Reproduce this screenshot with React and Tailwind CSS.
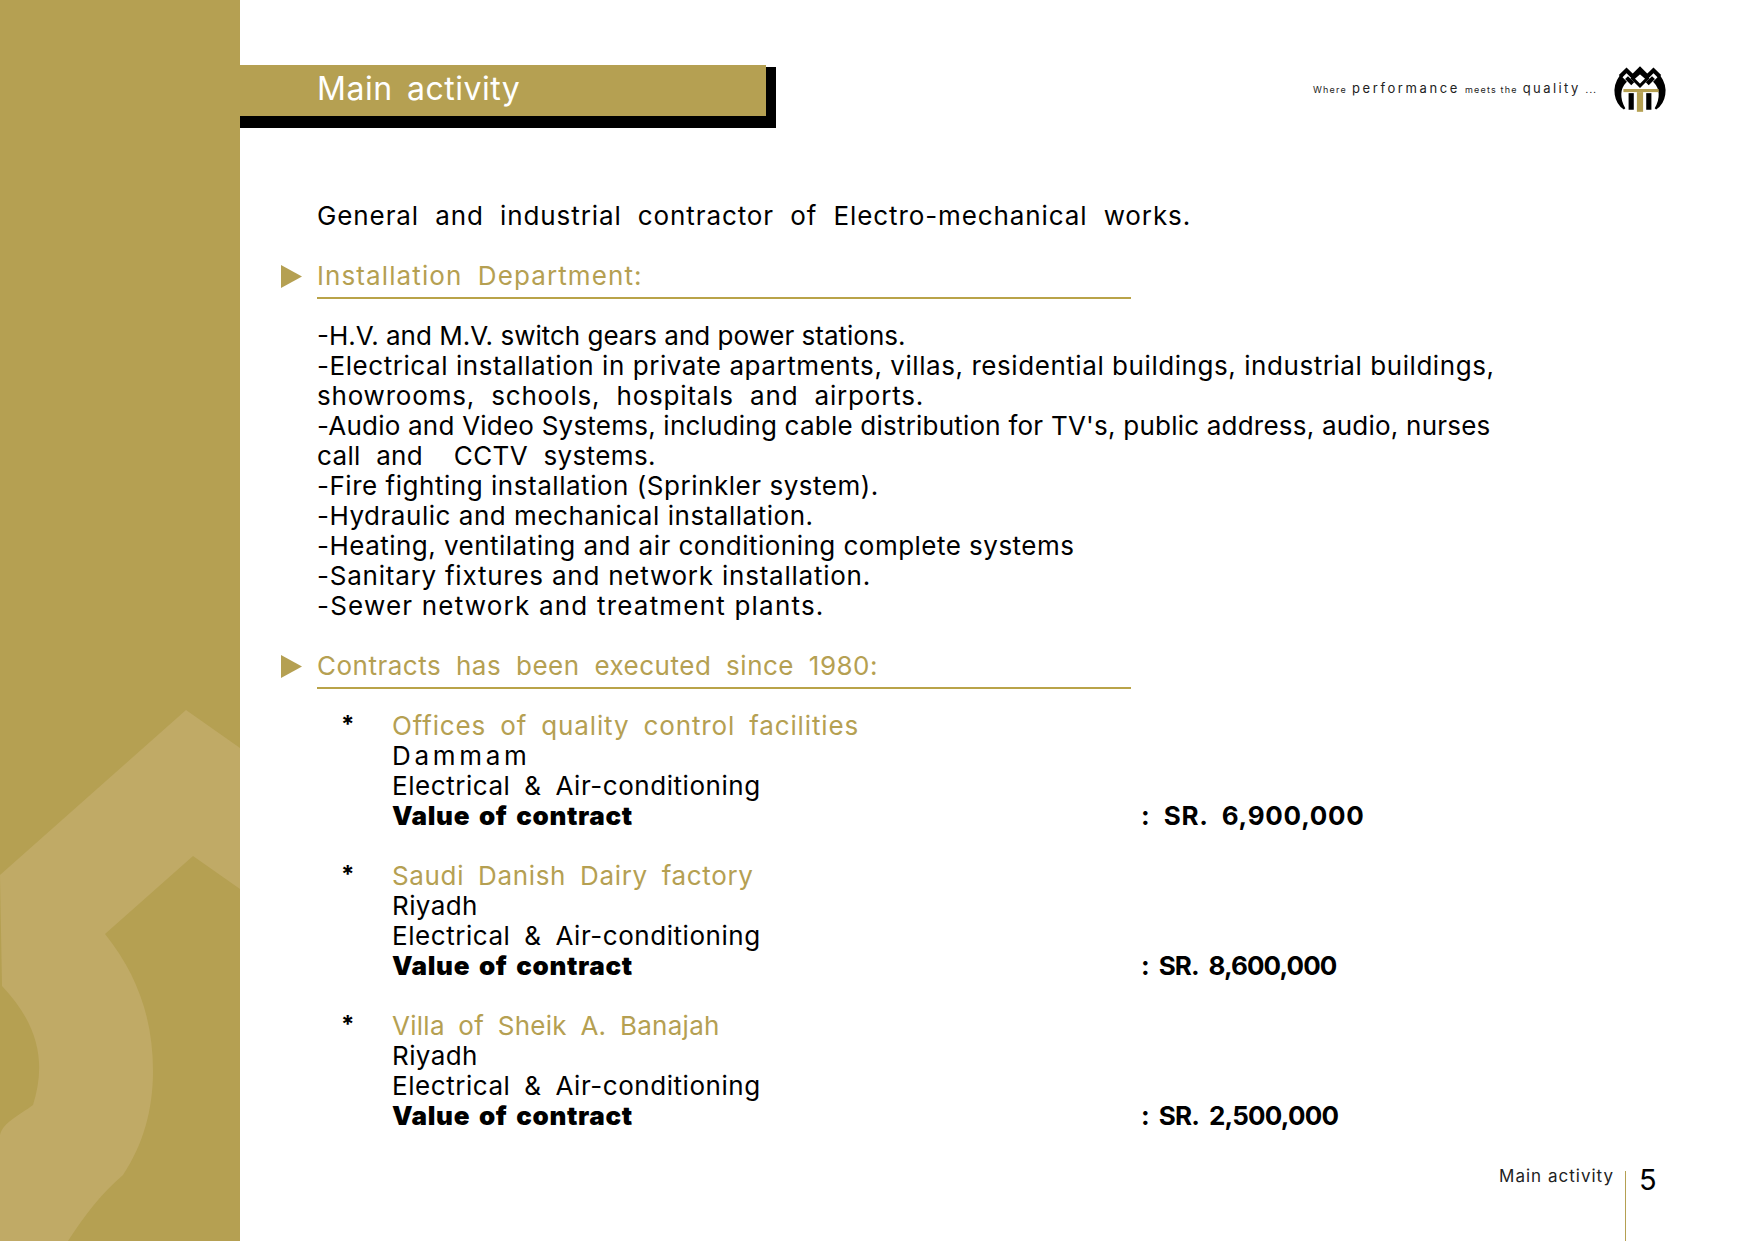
const GOLD = "text-[#b5a052]";

const installList = [
  { text: "-H.V. and M.V. switch gears and power stations.", cls: "tracking-[0px]" },
  { text: "-Electrical installation in private apartments, villas, residential buildings, industrial buildings,", cls: "tracking-[0.56px]" },
  { text: "showrooms,  schools,  hospitals  and  airports.", cls: "tracking-[0.8px]" },
  { text: "-Audio and Video Systems, including cable distribution for TV's, public address, audio, nurses", cls: "tracking-[0.22px]" },
  { text: "call  and    CCTV  systems.", cls: "tracking-[0.37px]" },
  { text: "-Fire fighting installation (Sprinkler system).", cls: "tracking-[0.53px]" },
  { text: "-Hydraulic and mechanical installation.", cls: "tracking-[0.53px]" },
  { text: "-Heating, ventilating and air conditioning complete systems", cls: "tracking-[0.48px]" },
  { text: "-Sanitary fixtures and network installation.", cls: "tracking-[0.77px]" },
  { text: "-Sewer network and treatment plants.", cls: "tracking-[1.2px]" },
];

const contracts = [
  {
    name: "Offices of quality control facilities",
    nameCls: "tracking-[0.85px]",
    city: "Dammam",
    cityCls: "tracking-[3.7px]",
    value: "SR.  6,900,000",
    valueCls: "ml-[14px] tracking-[0.75px]",
  },
  {
    name: "Saudi Danish Dairy factory",
    nameCls: "tracking-[0.65px]",
    city: "Riyadh",
    cityCls: "tracking-[0.4px]",
    value: "SR.  8,600,000",
    valueCls: "ml-[9px] -tracking-[0.9px]",
  },
  {
    name: "Villa of Sheik A. Banajah",
    nameCls: "tracking-[0.27px]",
    city: "Riyadh",
    cityCls: "tracking-[0.4px]",
    value: "SR.  2,500,000",
    valueCls: "ml-[9px] -tracking-[0.8px]",
  },
];

function Arrow() {
  return (
    <svg width="21" height="23" viewBox="0 0 21 23" className="shrink-0">
      <polygon points="0,0 21,11.5 0,23" fill="#b5a052" />
    </svg>
  );
}

// section heading with the little arrow and rule under it
function Heading({ children, cls }) {
  return (
    <div className="flex items-start -ml-[36px]">
      <div className="w-[36px] h-[30px] flex items-center">
        <Arrow />
      </div>
      <div className={`w-[814px] h-[38px] border-b-2 border-[#b9a348] ${GOLD} text-[26px] leading-[30px] whitespace-pre [word-spacing:7px] ${cls}`}>
        {children}
      </div>
    </div>
  );
}

function Logo() {
  return (
    <svg width="56" height="48" viewBox="0 0 54 46" fill="none">
      {/* crown */}
      <path d="M8 11 L14 5 L20 11 L27 4 L34 11 L40 5 L46 11" stroke="#000" strokeWidth="4" />
      <path d="M20 13 L27 7 L34 13 L27 20 Z" stroke="#000" strokeWidth="3" />
      <path d="M14 12 L20 18 M40 12 L34 18" stroke="#000" strokeWidth="4" />
      {/* shield sides */}
      <path d="M8 11 L13 16 C7 22 6 32 12 42 C3 36 0 22 8 11 Z" fill="#000" stroke="#000" strokeWidth="2" />
      <path d="M46 11 L41 16 C47 22 48 32 42 42 C51 36 54 22 46 11 Z" fill="#000" stroke="#000" strokeWidth="2" />
      {/* columns */}
      <rect x="11" y="23" width="34" height="3" fill="#b5a052" />
      <rect x="24" y="26" width="6" height="19" fill="#b5a052" />
      <rect x="16" y="27" width="5" height="16" fill="#000" />
      <rect x="33" y="27" width="5" height="16" fill="#000" />
    </svg>
  );
}

export default function App() {
  return (
    <div className="relative flex w-[1754px] h-[1241px] overflow-hidden bg-white text-black font-['Inter',sans-serif]">
      {/* left band */}
      <div className="relative w-[240px] shrink-0 bg-[#b5a052]">
        <svg width="240" height="1241" viewBox="0 0 240 1241" className="absolute inset-0">
          <path
            d="M186 710 L240 748 L240 889 L193 856 L105 934 C138 975 153 1020 153 1071 C153 1110 143 1145 123 1175 C100 1195 85 1215 68 1241 L0 1241 L0 1135 C3 1122 20 1115 33 1105 C44 1070 44 1030 2 986 L0 875 Z"
            fill="#c0aa66"
          />
        </svg>
      </div>

      <div className="flex-1 min-w-0 flex flex-col pt-[65px]">
        {/* header row */}
        <div className="flex items-start justify-between pr-[86px]">
          <div className="-ml-[3px] mt-[2px] w-[539px] h-[61px] shrink-0 bg-black">
            <div className="h-[51px] w-[529px] -mt-[2px] bg-[#b5a052] pl-[80px] pb-[3px] flex items-center text-white text-[32px] leading-none tracking-[0.5px] [word-spacing:5px]">
              Main activity
            </div>
          </div>
          <div className="flex items-center">
            <div className="flex items-baseline gap-[5px] mr-[15px] tracking-[1.2px] text-[#222]">
              <span className="text-[9px]">Where</span>
              <span className="text-[13px] tracking-[2.6px]">performance</span>
              <span className="text-[9px]">meets the</span>
              <span className="text-[13px] tracking-[2.4px]">quality</span>
              <span className="text-[9px]">...</span>
            </div>
            <Logo />
          </div>
        </div>

        <div className="pl-[77px] pt-[73px]">
          <div className="text-[26px] leading-[30px] tracking-[0.9px] [word-spacing:8px]">General and industrial contractor of Electro-mechanical works.</div>

          <div className="mt-[30px]">
            <Heading cls="tracking-[1.1px]">Installation Department:</Heading>
          </div>

          <div className="mt-[22px] text-[26px] leading-[30px]">
            {installList.map((l) => (
              <div key={l.text} className={`whitespace-pre ${l.cls}`}>
                {l.text}
              </div>
            ))}
          </div>

          <div className="mt-[30px]">
            <Heading cls="tracking-[0.5px]">Contracts has been executed since 1980:</Heading>
          </div>

          <div className="mt-[22px] flex flex-col gap-[30px] text-[26px] leading-[30px]">
            {contracts.map((c) => (
              <div key={c.name} className="flex">
                <div className="w-[75px] pl-[24px] pt-[1px] font-bold text-[24px] leading-[26px]">*</div>
                <div className="w-[749px] shrink-0">
                  <div className={`${GOLD} [word-spacing:6px] ${c.nameCls}`}>{c.name}</div>
                  <div className={c.cityCls}>{c.city}</div>
                  <div className="[word-spacing:6px] tracking-[0.55px]">Electrical &amp; Air-conditioning</div>
                  <div className="font-black [word-spacing:3px] tracking-[0.65px]">Value of contract</div>
                </div>
                <div className="self-end flex whitespace-pre font-bold">
                  <span>:</span>
                  <span className={c.valueCls}>{c.value}</span>
                </div>
              </div>
            ))}
          </div>
        </div>
      </div>

      {/* page footer */}
      <div className="absolute right-[97px] bottom-0 flex items-start h-[70px]">
        <div className="text-[17px] leading-[20px] tracking-[1px] text-[#222] -mt-[5px]">Main activity</div>
        <div className="w-[1px] h-[70px] bg-[#b5a052] ml-[11px] mr-[13px]" />
        <div className="text-[29px] leading-[29px] w-[18px] -mt-[6px]">5</div>
      </div>
    </div>
  );
}
